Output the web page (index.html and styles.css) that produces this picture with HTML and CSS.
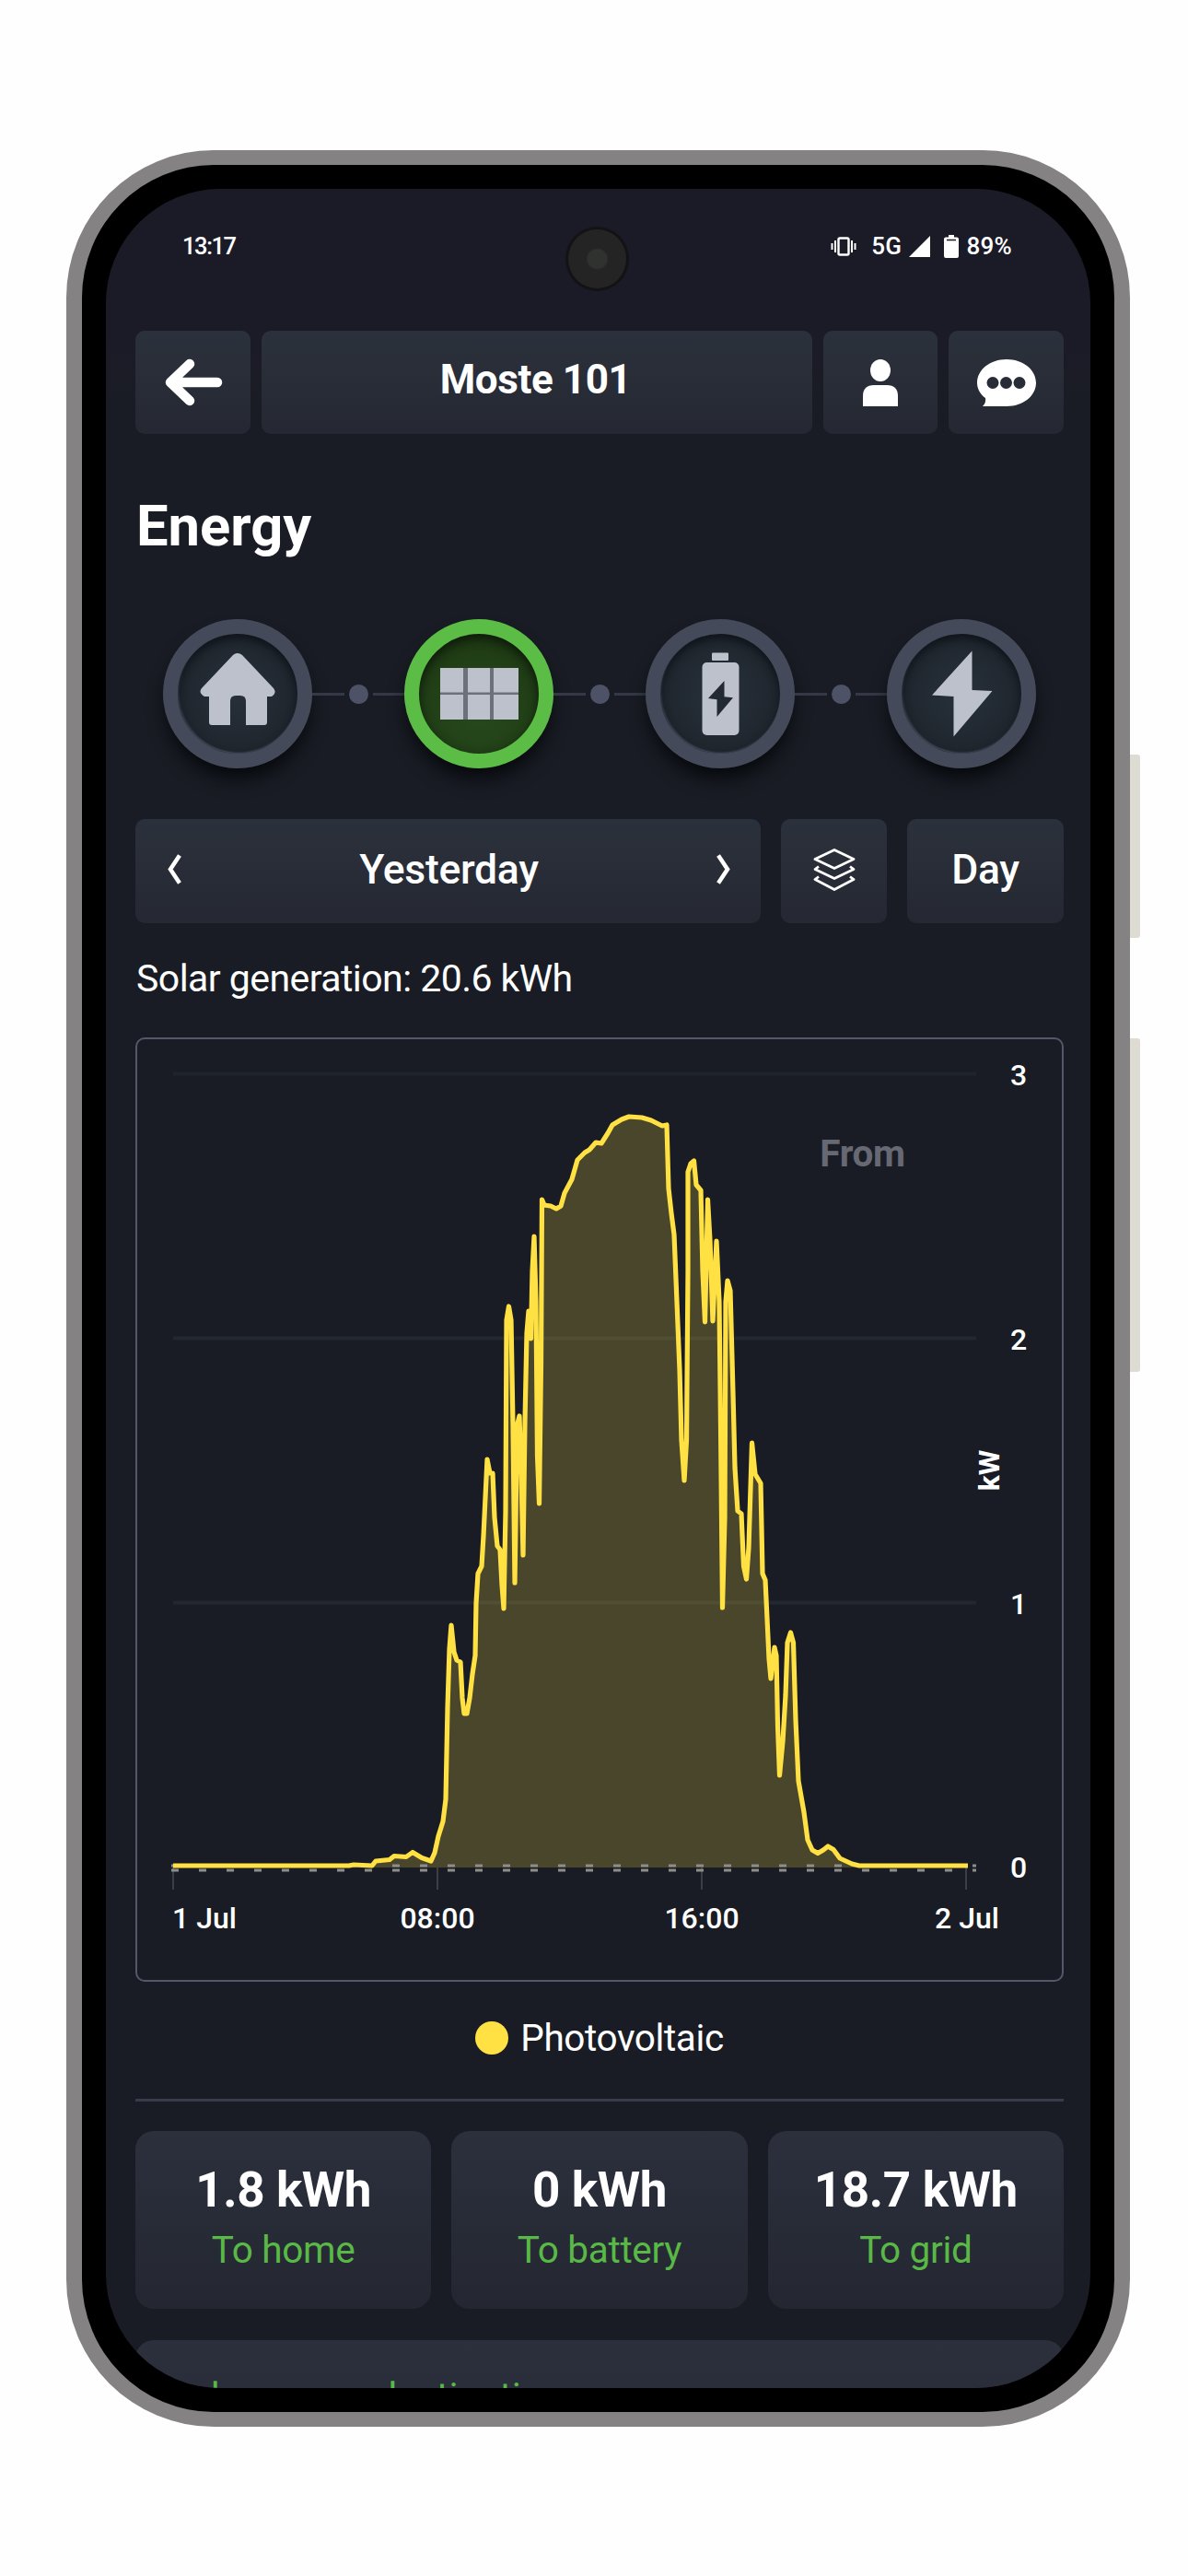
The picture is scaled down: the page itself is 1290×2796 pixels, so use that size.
FILE: index.html
```
<!DOCTYPE html>
<html lang="en">
<head>
  <meta charset="UTF-8" />
  <meta name="viewport" content="width=device-width, initial-scale=1.0"/>
  <title>Energy</title>
  <link rel="stylesheet" href="styles.css">
</head>
<body>
  <div class="phone">
    <span class="side-button power"></span>
    <span class="side-button volume"></span>
    <span class="camera"></span>

    <div class="screen">
      <div class="status-bar">
        <span class="time">13:17</span>
        <div class="status-icons">
          <svg class="vibrate" width="28" height="21" viewBox="0 0 28 21">
            <rect x="8.5" y="1.5" width="11" height="18" rx="1.5" fill="none" stroke="#fff" stroke-width="2.4"/>
            <path d="M5 4v13M1.5 7v7M23 4v13M26.5 7v7" stroke="#fff" stroke-width="2"/>
          </svg>
          <span class="network">5G</span>
          <svg class="signal" width="23" height="23" viewBox="0 0 23 23"><path d="M23 0v23H0z" fill="#fff"/></svg>
          <svg class="battery" width="16" height="25" viewBox="0 0 16 25">
            <path d="M5 0h6v2.500h3q2 0 2 2V23q0 2-2 2H2q-2 0-2-2V4.500q0-2 2-2h3z" fill="#fff"/>
            <path d="M3 5.500h10" stroke="#1b1b27" stroke-width="1.500"/>
          </svg>
          <span>89%</span>
        </div>
      </div>

      <div class="content">
        <header class="header">
          <button class="btn back">
            <svg width="64" height="52" viewBox="0 0 64 52" fill="none" stroke="#fff" stroke-width="10.500" stroke-linecap="round" stroke-linejoin="round">
              <path d="M28 6L7 26l21 20M9 26h49"/>
            </svg>
          </button>
          <button class="btn site">Moste 101</button>
          <button class="btn user">
            <svg width="38" height="51" viewBox="0 0 38 51" fill="#fff">
              <ellipse cx="19" cy="12" rx="11" ry="12"/>
              <path d="M0 51V40q0-12 12-12h14q12 0 12 12v11z"/>
            </svg>
          </button>
          <button class="btn chat">
            <svg width="64" height="51" viewBox="0 0 64 51">
              <path d="M32 0C49.500 0 64 11 64 25.500S49.500 51 32 51H6q4-4 3-9C3.500 38 0 32 0 25.500C0 11 14.500 0 32 0z" fill="#fff"/>
              <g fill="#282c37"><circle cx="17" cy="25.500" r="6.500"/><circle cx="31.500" cy="25.500" r="6.500"/><circle cx="46" cy="25.500" r="6.500"/></g>
            </svg>
          </button>
        </header>

        <h1>Energy</h1>

        <nav class="nodes">
          <div class="node">
            <svg viewBox="0 0 162 162">
              <path d="M76 39q5-4 10 0l34 36q4 5-2 9h-5v28q0 3-3 3H90V89q0-6-6-6h-5q-6 0-6 6v26H53q-3 0-3-3V84h-5q-7-4-3-9z"/>
            </svg>
          </div>
          <div class="link"><i></i></div>
          <div class="node active">
            <svg viewBox="0 0 162 162">
              <path fill="#6c7078" d="M39 53h85v56H39z"/>
              <path d="M39 53h25v26.500H39zM69 53h24v26.500H69zM97 53h27v26.500H97zM39 82h25v27H39zM69 82h24v27H69zM97 82h27v27H97z"/>
            </svg>
          </div>
          <div class="link"><i></i></div>
          <div class="node">
            <svg viewBox="0 0 162 162">
              <rect x="72" y="36.500" width="18" height="8.500" rx="1"/>
              <rect x="61.500" y="47" width="40" height="79" rx="5"/>
              <path fill="#222932" d="M85.500 67L68 86l9.500 1.200V106L95 85.200l-9.500-1z"/>
            </svg>
          </div>
          <div class="link"><i></i></div>
          <div class="node">
            <svg viewBox="0 0 162 162"><path d="M92.500 34.500L49 82.500l23.500 1.500v43.500L114.500 78l-22-1z"/></svg>
          </div>
        </nav>

        <div class="filters">
          <div class="btn period">
            <svg width="15" height="33" viewBox="0 0 15 33"><path d="M13 1.500L3 16.500l10 15"/></svg>
            <span>Yesterday</span>
            <svg width="15" height="33" viewBox="0 0 15 33"><path d="M2 1.500l10 15-10 15"/></svg>
          </div>
          <button class="btn layers">
            <svg width="46" height="46" viewBox="0 0 46 46" fill="none" stroke="#fff" stroke-width="2.800" stroke-linejoin="round">
              <path d="M23 1.500L44 11.500 23 21.500 2 11.500z"/>
              <path d="M6 19.500l-4 3 21 10 21-10-4-3"/>
              <path d="M6 30.500l-4 3 21 11 21-11-4-3"/>
            </svg>
          </button>
          <button class="btn range">Day</button>
        </div>

        <p class="summary">Solar generation: 20.6 kWh</p>

        <div class="chart">
          <svg viewBox="147 1126 1008 1025">
            <g class="grid">
              <path class="top" d="M188 1165.500H1060"/>
              <path d="M188 1452.500H1060M188 1739.500H1060"/>
            </g>
            <path class="area" d="M404 2025L408 2020 423 2018.500 428 2014.500 441 2015.500 448 2010.500 458 2016.500 468 2020 472 2011 476 1993 481 1977 484 1953 486 1853 488 1790 490 1764 493 1793 496 1802 500 1804 502 1843 504 1860 507 1860 510 1843 513 1817 516 1797 517 1740 519 1708 523 1700 525 1667 529 1584 532 1599 535 1599 537 1647 540 1678 543 1682 545 1720 547 1746 549 1640 550 1433 552.500 1418 555 1433 557 1547 559 1718 561.500 1547 564 1537 566 1600 568 1688 570 1543 572 1447 574 1423 576.500 1453 578 1380 580 1342 582 1413 583.500 1580 585.500 1632 587.500 1480 588.500 1302 591 1308 598 1309 604 1312 609 1309 613 1295 621 1280 627 1259 635 1251 640 1248 647 1240 653 1241 660 1230 665 1221 675 1215 683 1212 697 1213 707 1216 719 1222 724 1221 726 1290 729 1317 732 1340 735 1413 738 1487 740 1563 743 1607 745.500 1563 747 1380 747 1272 750 1263 753.500 1260 756 1286 761 1292 763 1380 765.500 1435 768.500 1302 771 1347 774 1434 778 1347 781 1413 782.500 1547 784.500 1745 787 1647 788 1413 790 1390 793 1401 796 1513 798 1593 801 1640 805 1643 807.500 1700 810.500 1714 813 1680 816.500 1566 820 1600 826 1610 828 1708 831 1715 833 1757 835 1800 837 1822 841 1788 843 1797 844.500 1873 846.500 1927 850 1890 853 1840 855 1783 858.500 1772 861.500 1783 864 1867 867 1933 873 1967 877 1997 882 2008 888 2011.500 894 2008 899 2004 905 2007.500 912 2017 925 2023 933 2025V2027H404z"/>
            <path class="axis" d="M188 2027v24M475 2027v24M762 2027v24M1049 2027v24"/>
            <path class="dashes" d="M186 2025H1060M186 2030H1060"/>
            <polyline class="line" points="188 2025 379 2025 384 2024 404 2025 408 2020 423 2018.500 428 2014.500 441 2015.500 448 2010.500 458 2016.500 468 2020 472 2011 476 1993 481 1977 484 1953 486 1853 488 1790 490 1764 493 1793 496 1802 500 1804 502 1843 504 1860 507 1860 510 1843 513 1817 516 1797 517 1740 519 1708 523 1700 525 1667 529 1584 532 1599 535 1599 537 1647 540 1678 543 1682 545 1720 547 1746 549 1640 550 1433 552.500 1418 555 1433 557 1547 559 1718 561.500 1547 564 1537 566 1600 568 1688 570 1543 572 1447 574 1423 576.500 1453 578 1380 580 1342 582 1413 583.500 1580 585.500 1632 587.500 1480 588.500 1302 591 1308 598 1309 604 1312 609 1309 613 1295 621 1280 627 1259 635 1251 640 1248 647 1240 653 1241 660 1230 665 1221 675 1215 683 1212 697 1213 707 1216 719 1222 724 1221 726 1290 729 1317 732 1340 735 1413 738 1487 740 1563 743 1607 745.500 1563 747 1380 747 1272 750 1263 753.500 1260 756 1286 761 1292 763 1380 765.500 1435 768.500 1302 771 1347 774 1434 778 1347 781 1413 782.500 1547 784.500 1745 787 1647 788 1413 790 1390 793 1401 796 1513 798 1593 801 1640 805 1643 807.500 1700 810.500 1714 813 1680 816.500 1566 820 1600 826 1610 828 1708 831 1715 833 1757 835 1800 837 1822 841 1788 843 1797 844.500 1873 846.500 1927 850 1890 853 1840 855 1783 858.500 1772 861.500 1783 864 1867 867 1933 873 1967 877 1997 882 2008 888 2011.500 894 2008 899 2004 905 2007.500 912 2017 925 2023 933 2025 1051 2025"/>
            <g class="labels">
              <text x="1106" y="1177.500">3</text>
              <text x="1106" y="1465">2</text>
              <text x="1106" y="1751.500">1</text>
              <text x="1106" y="2038">0</text>
              <text x="222" y="2093">1 Jul</text>
              <text x="475" y="2093">08:00</text>
              <text x="762" y="2093">16:00</text>
              <text x="1050" y="2093">2 Jul</text>
              <text class="unit" transform="translate(1084.500 1596) rotate(-90)">kW</text>
              <text class="from" x="936.500" y="1265.500">From</text>
            </g>
          </svg>
        </div>

        <div class="legend"><i></i><span>Photovoltaic</span></div>

        <div class="stats">
          <div class="card"><b>1.8 kWh</b><span>To home</span></div>
          <div class="card"><b>0 kWh</b><span>To battery</span></div>
          <div class="card"><b>18.7 kWh</b><span>To grid</span></div>
        </div>

        <div class="card destination">Solar power destination</div>
      </div>
    </div>
  </div>
</body>
</html>
```
FILE: styles.css
```
* {
  margin: 0;
  padding: 0;
  box-sizing: border-box;
}

body {
  width: 1290px;
  height: 2796px;
  overflow: hidden;
  padding: 163px 0 0 72px;
  background: #fefefe;
  font-family: Roboto, 'Liberation Sans', sans-serif;
  color: #fff;
}

svg {
  display: block;
}

/* Phone frame */
.phone {
  position: relative;
  width: 1155px;
  height: 2471px;
  padding: 26px;
  border: 16px solid #858284;
  border-left-width: 17px;
  border-right-width: 17px;
  border-radius: 160px;
  background: #000;
}

.side-button {
  position: absolute;
  right: -28px;
  width: 11px;
  background: #dedcd2;
  border-radius: 0 3px 3px 0;
}

.power {
  top: 640px;
  height: 199px;
}

.volume {
  top: 948px;
  height: 362px;
}

.camera {
  position: absolute;
  top: 67px;
  left: 525px;
  width: 69px;
  height: 70px;
  border: 3px solid #131315;
  border-radius: 50%;
  background: radial-gradient(circle, #303230 0 10px, #252424 12px);
  z-index: 1;
}

.screen {
  height: 2387px;
  overflow: hidden;
  border-radius: 124px;
  background: linear-gradient(#1b1b27 0, #1b1b27 140px, #191c24 280px);
}

.status-bar {
  display: flex;
  justify-content: space-between;
  height: 154px;
  padding: 46px 85px 0 83px;
  font-size: 25.5px;
  font-weight: 500;
  line-height: 32px;
}

.time {
  letter-spacing: -1.4px;
}

.status-icons {
  display: flex;
  align-items: center;
  height: 32px;
  font-size: 26px;
  letter-spacing: 0.3px;
}

.network {
  margin: 0 8px 0 16px;
}

.battery {
  margin: 0 8px 0 15px;
}

.content {
  padding: 0 29px 0 32px;
}

/* Buttons */
.btn {
  display: flex;
  align-items: center;
  justify-content: center;
  border: none;
  border-radius: 10px;
  background: linear-gradient(#2b313c, #252832);
  color: #fff;
  font-family: inherit;
  font-size: 44.5px;
  font-weight: 500;
}

.header {
  display: grid;
  grid-template-columns: 125px 1fr 124px 125px;
  gap: 12px;
  height: 112px;
}

.site {
  padding: 0 3px 6px 0;
  font-size: 44px;
  font-weight: 700;
  letter-spacing: -0.4px;
}

h1 {
  margin-top: 64px;
  padding-left: 1px;
  font-size: 61.5px;
  line-height: 72px;
  font-weight: 700;
}

/* Energy flow */
.nodes {
  display: flex;
  align-items: center;
  margin: 65px 30px 0 30px;
}

.node {
  flex: none;
  width: 162px;
  height: 162px;
  border: 16px solid #444a5a;
  border-radius: 50%;
  background: radial-gradient(circle, #27303a, #20272f 60%, #1a2028);
  box-shadow: 0 14px 20px -4px #06080b, inset 0 5px 9px #10141a, inset 1px -1px 2px #505768;
}

.node svg {
  width: 162px;
  height: 162px;
  margin: -16px;
  fill: #bcc1cc;
}

.node.active {
  border-color: #5bbd46;
  background: radial-gradient(circle at 50% 65%, #27491b, #213f17 55%, #19300f);
  box-shadow: 0 14px 20px -4px #06080b, inset 0 5px 11px #0e1a0a;
}

.link {
  flex: 1;
  display: flex;
  align-items: center;
  gap: 5px;
}

.link::before,
.link::after {
  content: '';
  flex: 1;
  height: 3px;
  background: #343945;
}

.link i {
  width: 21px;
  height: 21px;
  border-radius: 50%;
  background: #4d5267;
}

/* Period row */
.filters {
  display: grid;
  grid-template-columns: 1fr 115px 170px;
  gap: 22px;
  height: 113px;
  margin-top: 55px;
}

.filters .btn {
  padding-bottom: 4px;
  font-size: 44.5px;
  letter-spacing: -0.3px;
}

.period {
  justify-content: space-between;
  padding: 0 33px 0 35px;
}

.period svg {
  fill: none;
  stroke: #fff;
  stroke-width: 4.5px;
}

.summary {
  margin-top: 36px;
  padding-left: 1px;
  font-size: 41px;
  line-height: 48px;
  letter-spacing: -0.55px;
}

/* Chart */
.chart {
  height: 1025px;
  margin-top: 40px;
  border: 2px solid #545869;
  border-radius: 10px;
}

.chart svg {
  width: 1008px;
  height: 1025px;
  margin: -2px;
}

.grid {
  stroke: #23272f;
  stroke-width: 4;
}

.grid .top {
  stroke: #1f232a;
}

.area {
  fill: #ffe345;
  fill-opacity: 0.21;
}

.line {
  fill: none;
  stroke: #ffe144;
  stroke-width: 5.2;
  stroke-linejoin: round;
}

.axis {
  stroke: #3b3e42;
  stroke-width: 2;
}

.dashes {
  stroke: #8d8e8a;
  stroke-width: 3;
  stroke-dasharray: 8 22;
}

.labels text {
  fill: #fff;
  font-size: 32px;
  font-weight: 500;
  text-anchor: middle;
}

.labels .from {
  fill: #666974;
  font-size: 40.5px;
  font-weight: 700;
  letter-spacing: -0.4px;
}

.labels .unit {
  font-weight: 700;
  font-size: 31.5px;
}

.legend {
  display: flex;
  align-items: center;
  justify-content: center;
  gap: 13px;
  height: 90px;
  margin-top: 37px;
  padding-bottom: 42px;
  line-height: 48px;
  font-size: 40.5px;
  letter-spacing: -0.4px;
}

.legend i {
  width: 36px;
  height: 36px;
  border-radius: 50%;
  background: #ffe144;
}

/* Totals */
.stats {
  display: grid;
  grid-template-columns: repeat(3, 1fr);
  gap: 22px;
  padding-top: 32px;
  border-top: 3px solid #383c48;
}

.card {
  border-radius: 20px;
  background: linear-gradient(#2b303c, #242732);
}

.stats .card {
  height: 193px;
  padding-top: 34px;
  text-align: center;
}

.card b {
  display: block;
  font-size: 53px;
  line-height: 60px;
  font-weight: 700;
  letter-spacing: -0.4px;
}

.card span {
  display: block;
  margin-top: 11px;
  font-size: 40.5px;
  line-height: 48px;
  letter-spacing: -0.3px;
  color: #5ab946;
}

.destination {
  height: 193px;
  margin-top: 34px;
  padding: 37px 34px;
  font-size: 41px;
  line-height: 48px;
  color: #5ab946;
}
```
